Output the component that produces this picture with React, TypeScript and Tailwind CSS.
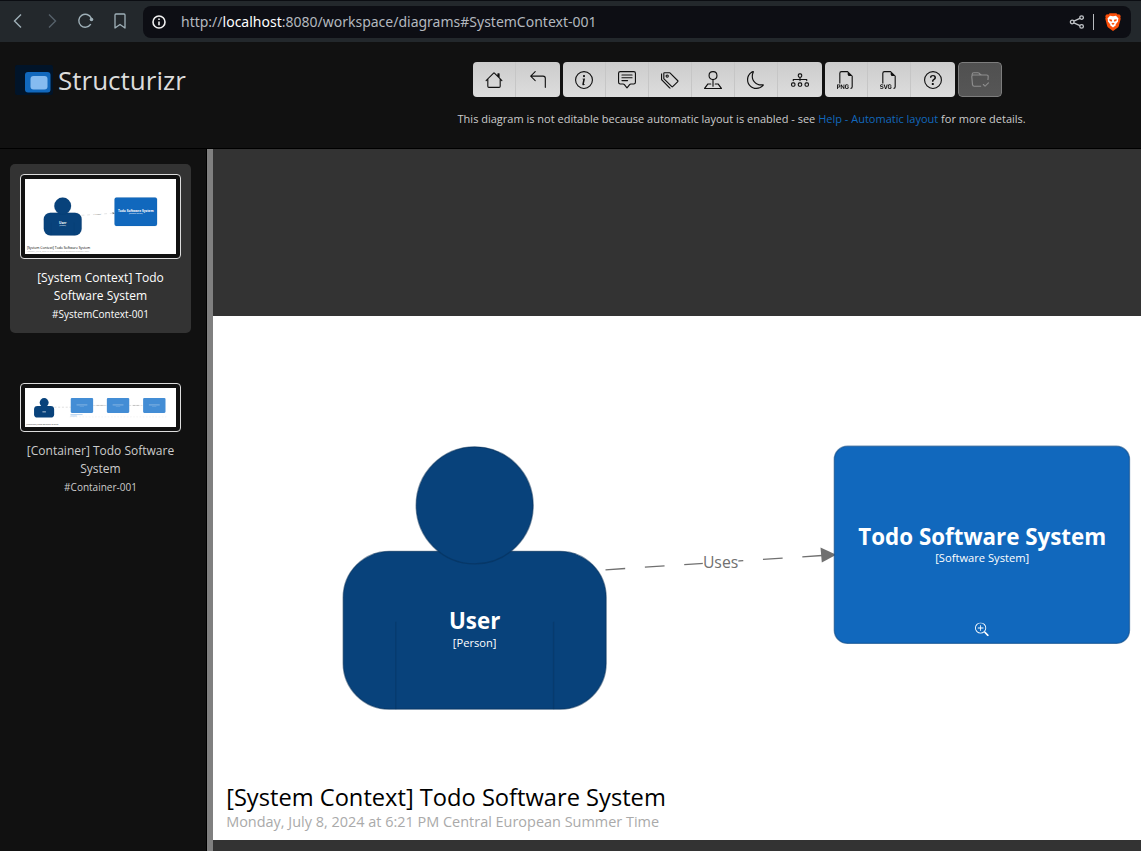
import type { ReactNode } from "react";
import type { IconType } from "react-icons";
import {
  BsArrow90DegLeft,
  BsChatSquareText,
  BsDiagram3,
  BsFiletypePng,
  BsFiletypeSvg,
  BsFolderCheck,
  BsHouse,
  BsInfoCircle,
  BsMoon,
  BsPinMap,
  BsQuestionCircle,
  BsTags,
  BsZoomIn,
} from "react-icons/bs";

type ToolbarItem = { label: string; icon: IconType; disabled?: boolean };

const toolbar: ToolbarItem[][] = [
  [
    { label: "Home", icon: BsHouse },
    { label: "Back", icon: BsArrow90DegLeft },
  ],
  [
    { label: "Diagram key", icon: BsInfoCircle },
    { label: "Description", icon: BsChatSquareText },
    { label: "Tags", icon: BsTags },
    { label: "Perspectives", icon: BsPinMap },
    { label: "Dark mode", icon: BsMoon },
    { label: "Navigation", icon: BsDiagram3 },
  ],
  [
    { label: "Export to PNG", icon: BsFiletypePng },
    { label: "Export to SVG", icon: BsFiletypeSvg },
    { label: "Help", icon: BsQuestionCircle },
  ],
  [{ label: "Save workspace", icon: BsFolderCheck, disabled: true }],
];

function BrowserBar() {
  return (
    <div className="flex h-[42px] items-center border-t border-[#0b0d12] bg-[#23282c] pr-[10px] text-[#9fb0b8]">
      <nav className="flex items-center gap-[14px] px-2" aria-label="Browser">
        <button type="button" aria-label="Go back" className="flex size-5 items-center justify-center">
          <svg width="20" height="20" fill="none" stroke="currentColor" strokeWidth="1.4">
            <path d="M13 2.5 6.5 9l6.5 6.5" />
          </svg>
        </button>
        <button type="button" aria-label="Go forward" disabled className="flex size-5 items-center justify-center text-[#56616a]">
          <svg width="20" height="20" fill="none" stroke="currentColor" strokeWidth="1.4">
            <path d="M7 2.5 13.5 9 7 15.5" />
          </svg>
        </button>
        <button type="button" aria-label="Reload" className="flex size-5 items-center justify-center">
          <svg width="20" height="20" fill="none" stroke="currentColor" strokeWidth="1.4">
            <path d="M14.8 12.2A6.5 6.5 0 1 1 15.3 6.2" />
            <circle cx="15.5" cy="7.5" r="1.8" fill="currentColor" stroke="none" />
          </svg>
        </button>
        <button type="button" aria-label="Bookmark" className="flex size-5 items-center justify-center">
          <svg width="20" height="20" fill="none" stroke="currentColor" strokeWidth="1.3" strokeLinejoin="round">
            <path d="M5 3q0-1 1-1h8q1 0 1 1v13l-5-3.5L5 16z" />
          </svg>
        </button>
      </nav>

      <div className="ml-[5px] flex h-8 flex-1 items-center rounded-lg bg-[#0d0e14] pl-2 pr-[10px]">
        <svg width="16" height="16" viewBox="0 0 16 16" fill="none" stroke="#f2f2f2" strokeWidth="1.6">
          <circle cx="8" cy="8" r="6" />
          <path d="M8 7.4v3.8M8 4.6v1.5" />
        </svg>
        <div
          role="textbox"
          aria-label="Address"
          contentEditable
          suppressContentEditableWarning
          className="ml-[14px] flex-1 font-['Noto_Sans',sans-serif] text-sm text-[#b3b8bf] outline-none"
        >
          http://<span className="text-white">localhost</span>:8080/workspace/diagrams#SystemContext-001
        </div>
        <button type="button" aria-label="Share" className="text-[#c3c6ca]">
          <svg width="16" height="16" viewBox="0 0 16 16" fill="none" stroke="currentColor" strokeWidth="1.3">
            <circle cx="3.2" cy="8" r="1.8" />
            <circle cx="12.6" cy="3.6" r="1.8" />
            <circle cx="12.6" cy="12.4" r="1.8" />
            <path d="m4.9 7.2 6-2.8M4.9 8.8l6 2.8" />
          </svg>
        </button>
        <span className="ml-2 h-4 w-px bg-[#b9bcc0]" />
        <button type="button" aria-label="Brave Shields" className="ml-[11px]">
          <svg width="16" height="18" viewBox="0 0 16 18">
            <path d="M4.6.2h6.8l1.2 1.3 1.6-.2L15.8 3l-.5 1.3.4 1.4-1.9 7.2c-.2.8-.6 1.4-1.3 1.9L8 17.9l-4.5-3.1c-.7-.5-1.1-1.1-1.3-1.9L.3 5.7l.4-1.4L.2 3l1.6-1.7 1.6.2z" fill="#fb4f0a" />
            <path d="M5 2.7 8 3.3l3-.6 2.5 2.8-.5 1.6.2 1.2-2.6 3.1.3.9L8 14.6l-2.9-2.3.3-.9-2.6-3.1.2-1.2-.5-1.6z" fill="#fff" />
            <path d="m4.2 6.2 2.4.4.5.9-.6 1.2-2-1zM11.8 6.2l-2.4.4-.5.9.6 1.2 2-1zM6.3 10.6 8 9.8l1.7.8L8 12z" fill="#fb4f0a" />
          </svg>
        </button>
      </div>
    </div>
  );
}

function Header() {
  return (
    <header className="flex h-[107px] border-b border-black pt-5">
      <div className="w-[30%] pl-[15px]">
        <a href="#home" className="flex h-9 items-center gap-[5px] text-[#dcdcdc]">
          <svg width="38" height="30" viewBox="0 0 38 30">
            <rect width="38" height="30" rx="2" fill="#011429" />
            <rect x="10" y="7" width="25.5" height="20.5" rx="3" fill="#1168bd" />
            <rect x="15.5" y="11" width="17" height="13.5" rx="3" fill="#85bbf0" />
          </svg>
          <span className="text-[26px] leading-9">Structurizr</span>
        </a>
      </div>

      <div className="flex flex-1 flex-col items-center">
        <div className="flex gap-[3px] pr-2">
          {toolbar.map((group) => (
            <div key={group[0].label} className="flex overflow-hidden rounded-[4px]">
              {group.map(({ label, icon: Icon, disabled }) => (
                <button
                  key={label}
                  type="button"
                  title={label}
                  aria-label={label}
                  disabled={disabled}
                  className="flex h-[35px] w-[43px] items-center justify-center border-r border-[#c6c6c6] bg-linear-to-b from-[#cccccc] to-[#dddddd] text-[#111111] last:w-11 last:border-r-0 disabled:rounded-[4px] disabled:border disabled:border-[#7d7d7d] disabled:from-[#505050] disabled:to-[#565656] disabled:text-[#8e8e8e] disabled:last:border-r"
                >
                  <Icon size={18} />
                </button>
              ))}
            </div>
          ))}
        </div>
        <p className="mt-[14px] text-[11px] leading-4 text-[#cccccc]">
          This diagram is not editable because automatic layout is enabled - see{" "}
          <a href="#help" className="text-[#1168bd]">
            Help - Automatic layout
          </a>{" "}
          for more details.
        </p>
      </div>
    </header>
  );
}

type DiagramProps = { className?: string; preview?: boolean };

function SystemContextDiagram({ className, preview }: DiagramProps) {
  return (
    <svg
      viewBox="0 0 1594 797"
      preserveAspectRatio="xMidYMid slice"
      className={className}
      role="img"
      aria-label="System context diagram"
    >
      <rect width="1594" height="797" fill="#ffffff" />

      <g fill="#08427b" stroke="#052e56" strokeOpacity="0.5" strokeWidth="2">
        <rect x="198" y="358" width="400" height="240" rx="70" />
        <circle cx="398" cy="288" r="89" />
        <path d="M278 465v133M518 465v133" strokeOpacity="0.35" />
      </g>
      <g fill="#ffffff" textAnchor="middle">
        <text x="398" y="476" fontSize="34" fontWeight="700">User</text>
        <text x="398" y="503" fontSize="17">[Person]</text>
      </g>

      <path d="M597 386 946 363" stroke="#707070" strokeWidth="2" strokeDasharray="30 30" />
      <path d="m924 352 24 11-22 12z" fill="#707070" />
      <rect x="745" y="360" width="54" height="28" fill="#ffffff" />
      <text x="772" y="383" fontSize="24" fill="#707070" textAnchor="middle">Uses</text>

      <rect x="945" y="198" width="449" height="300" rx="20" fill="#1168bd" stroke="#0b4884" strokeOpacity="0.6" strokeWidth="2" />
      <g fill="#ffffff" textAnchor="middle">
        <text x="1170" y="348" fontSize="34" fontWeight="700">Todo Software System</text>
        <text x="1170" y="374" fontSize="17">[Software System]</text>
      </g>
      {!preview && <BsZoomIn x="1159" y="466" size={21} color="#ffffff" />}

      <text x="20" y="745" fontSize="36" fill="#000000">[System Context] Todo Software System</text>
      <text x="20" y="777" fontSize="22" fill="#aaaaaa">
        Monday, July 8, 2024 at 6:21 PM Central European Summer Time
      </text>
    </svg>
  );
}

function ContainerDiagram({ className }: DiagramProps) {
  return (
    <svg
      viewBox="0 0 1048 270"
      preserveAspectRatio="xMidYMid slice"
      className={className}
      role="img"
      aria-label="Container diagram"
    >
      <rect width="1048" height="270" fill="#ffffff" />
      <g fill="#08427b">
        <circle cx="134" cy="101" r="31" />
        <rect x="64" y="125" width="139" height="80" rx="24" />
      </g>
      <path d="M122 165h24" stroke="#ffffff" strokeOpacity="0.6" strokeWidth="8" />
      {[318, 568, 819].map((x) => (
        <g key={x}>
          <rect x={x} y="69" width="155" height="104" rx="8" fill="#438dd5" />
          <path d={`M${x + 40} 117h75`} stroke="#ffffff" strokeOpacity="0.3" strokeWidth="8" />
          <path d={`M${x + 62} 128h30`} stroke="#ffffff" strokeOpacity="0.2" strokeWidth="5" />
        </g>
      ))}
      <path
        d="M205 133h113M473 121h95M723 121h96"
        stroke="#707070"
        strokeOpacity="0.5"
        strokeWidth="3"
        strokeDasharray="14 12"
      />
      <path d="M490 121h62M745 121h50" stroke="#707070" strokeOpacity="0.3" strokeWidth="6" />
      <path d="M310 200h670" stroke="#444444" strokeOpacity="0.2" strokeWidth="2" strokeDasharray="12 10" />
      <path d="M316 184h84M316 194h44" stroke="#438dd5" strokeOpacity="0.5" strokeWidth="5" />
      <text x="10" y="258" fontSize="14" fill="#333333">[Container] Todo Software System</text>
    </svg>
  );
}

type ViewCardProps = { title: string; viewKey: string; active?: boolean; children: ReactNode };

function ViewCard({ title, viewKey, active, children }: ViewCardProps) {
  return (
    <a
      href={`#${viewKey}`}
      aria-current={active ? "page" : undefined}
      className="block rounded-[5px] p-[10px] text-center text-xs leading-[18px] text-[#cccccc] aria-[current=page]:bg-[#333333] aria-[current=page]:text-white"
    >
      <div className="mb-[10px] rounded-[4px] border border-[#dddddd] bg-[#111111] p-1">{children}</div>
      <div>{title}</div>
      <div className="text-[10px] leading-[18px]">#{viewKey}</div>
    </a>
  );
}

export default function App() {
  return (
    <div className="flex min-h-screen flex-col bg-[#111111] font-['Open_Sans','Noto_Sans',sans-serif]">
      <BrowserBar />
      <Header />
      <div className="flex flex-1">
        <aside className="flex w-[207px] shrink-0 flex-col gap-10 border-r border-black pl-[10px] pr-[15px] pt-[15px]">
          <ViewCard title="[System Context] Todo Software System" viewKey="SystemContext-001" active>
            <SystemContextDiagram className="block h-[75px] w-full" preview />
          </ViewCard>
          <ViewCard title="[Container] Todo Software System" viewKey="Container-001">
            <ContainerDiagram className="block h-[39px] w-full" />
          </ViewCard>
        </aside>
        <main className="min-w-0 flex-1 overflow-hidden border-l-[6px] border-[#808080] bg-[#333333] pb-[11px] pt-[167px]">
          {/* wider than the viewport, the canvas runs off to the right */}
          <SystemContextDiagram className="block w-[1048px] max-w-none" />
        </main>
      </div>
    </div>
  );
}
